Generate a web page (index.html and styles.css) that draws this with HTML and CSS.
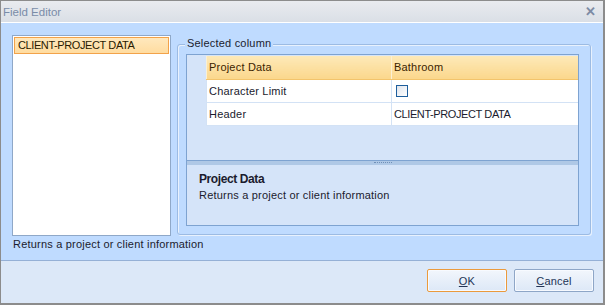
FILE: index.html
```html
<!DOCTYPE html>
<html lang="en">
<head>
    <meta charset="UTF-8">
    <title>Field Editor</title>
    <link rel="stylesheet" href="styles.css">
</head>
<body>
    <div class="window">
        <div class="titlebar">
            <span class="title">Field Editor</span>
            <span class="close">&#x2715;</span>
        </div>
        <div class="main">
            <div class="list">
                <div class="list-item selected caps">CLIENT-PROJECT DATA</div>
            </div>
            <div class="group">
                <span class="legend">Selected column</span>
                <div class="panel">
                    <div class="grid-area">
                        <div class="row-heads"></div>
                        <table class="grid">
                            <tr class="head">
                                <td class="c1">Project Data</td>
                                <td>Bathroom</td>
                            </tr>
                            <tr>
                                <td class="c1">Character Limit</td>
                                <td><span class="check"></span></td>
                            </tr>
                            <tr>
                                <td class="c1">Header</td>
                                <td class="caps">CLIENT-PROJECT DATA</td>
                            </tr>
                        </table>
                    </div>
                    <div class="splitter"><span class="grip"></span></div>
                    <div class="help">
                        <div class="help-title">Project Data</div>
                        <div class="help-text">Returns a project or client information</div>
                    </div>
                </div>
            </div>
        </div>
        <div class="status">Returns a project or client information</div>
        <div class="footer">
            <button class="btn default"><u>O</u>K</button>
            <button class="btn"><u>C</u>ancel</button>
        </div>
    </div>
</body>
</html>
```

FILE: styles.css
```css
body {
    margin: 0;
    font-family: "Liberation Sans", Arial, sans-serif;
    font-size: 11px;
    letter-spacing: 0.2px;
    color: #1b1b2e;
}

.caps {
    letter-spacing: -0.4px;
}

.window {
    width: 605px;
    height: 305px;
    box-sizing: border-box;
    border: 1px solid #8c8c8c;
    border-right-width: 2px;
    border-bottom-width: 2px;
    background-color: #bfdbff;
    display: flex;
    flex-direction: column;
}

.titlebar {
    height: 21px;
    border-bottom: 1px solid #ffffff;
    background: linear-gradient(#e9ebef, #dadfe6);
    display: flex;
    align-items: center;
    justify-content: space-between;
    padding: 0 7px 0 2px;
}

.title {
    font-size: 11.5px;
    letter-spacing: 0;
    color: #7a8ca8;
}

.close {
    font-size: 13px;
    font-weight: bold;
    color: #7d8ba4;
}

.main {
    display: flex;
    gap: 6px;
    padding: 12px 0 0 11px;
    height: 201px;
}

.list {
    width: 159px;
    height: 201px;
    box-sizing: border-box;
    border: 1px solid #8fa8c8;
    background-color: #fff;
    padding: 1px;
}

.list-item {
    height: 17px;
    box-sizing: border-box;
    padding: 0 3px;
    line-height: 15px;
    border: 1px solid #f2a24a;
    background: linear-gradient(#ffe8bd, #ffdca0);
    color: #2a1a00;
}

.group {
    position: relative;
    margin-top: 9px;
    width: 414px;
    height: 191px;
    box-sizing: border-box;
    border: 1px solid #9cbbe3;
    border-radius: 3px;
    box-shadow: inset 1px 1px 0 #e8f1fd, 1px 1px 0 #e8f1fd;
    padding: 9px 11px 8px 8px;
}

.legend {
    position: absolute;
    top: -8px;
    left: 7px;
    padding: 0 2px;
    background-color: #bfdbff;
    color: #1b1b2e;
}

.panel {
    height: 172px;
    box-sizing: border-box;
    border: 1px solid #7ea3d1;
    background-color: #d5e4f9;
    display: flex;
    flex-direction: column;
}

.grid-area {
    display: flex;
    height: 105px;
}

.row-heads {
    width: 19px;
    flex-shrink: 0;
}

.grid {
    flex: 1;
    border-collapse: collapse;
    align-self: flex-start;
    margin-top: 1px;
}

.grid td {
    height: 23px;
    box-sizing: border-box;
    padding: 0 2px;
    background-color: #fff;
    border-left: 1px solid #d3e2f5;
    border-bottom: 1px solid #d3e2f5;
    white-space: nowrap;
}

.grid td.c1 {
    width: 185px;
}

.grid .head td {
    background: linear-gradient(#fde9b8, #fbd78c);
    border-left-color: #fbf0d4;
    border-bottom: 1px solid #f3c46c;
    color: #3b2300;
}

.check {
    display: inline-block;
    width: 10px;
    height: 10px;
    margin-left: 2px;
    border: 1px solid #1e5e9c;
    background: linear-gradient(135deg, #dfe4ec, #ffffff);
    vertical-align: middle;
}

.splitter {
    height: 4px;
    border-top: 1px solid #7ea3d1;
    background-color: #afc8e6;
    display: flex;
    justify-content: center;
}

.grip {
    width: 18px;
    margin-top: 1px;
    height: 1px;
    border-top: 1px dotted #6f8fb8;
}

.help {
    padding: 7px 12px;
}

.help-title {
    font-weight: bold;
    font-size: 12px;
    letter-spacing: -0.4px;
}

.help-text {
    margin-top: 3px;
}

.status {
    height: 24px;
    padding-left: 12px;
    line-height: 17px;
}

.footer {
    flex: 1;
    border-top: 1px solid #95b0d6;
    background-color: #dce8f8;
    display: flex;
    justify-content: flex-end;
    align-items: flex-start;
    gap: 7px;
    padding: 8px 9px 0 0;
}

.btn {
    width: 80px;
    height: 23px;
    font-family: inherit;
    font-size: 11px;
    letter-spacing: 0.2px;
    color: #233456;
    border: 1px solid #8ea6c7;
    border-radius: 2px;
    background: linear-gradient(#f2f6fc, #dde8f7);
    box-shadow: inset 0 0 0 1px #f7faff;
    padding: 0;
}

.btn.default {
    border-color: #eb9a3c;
}
```
